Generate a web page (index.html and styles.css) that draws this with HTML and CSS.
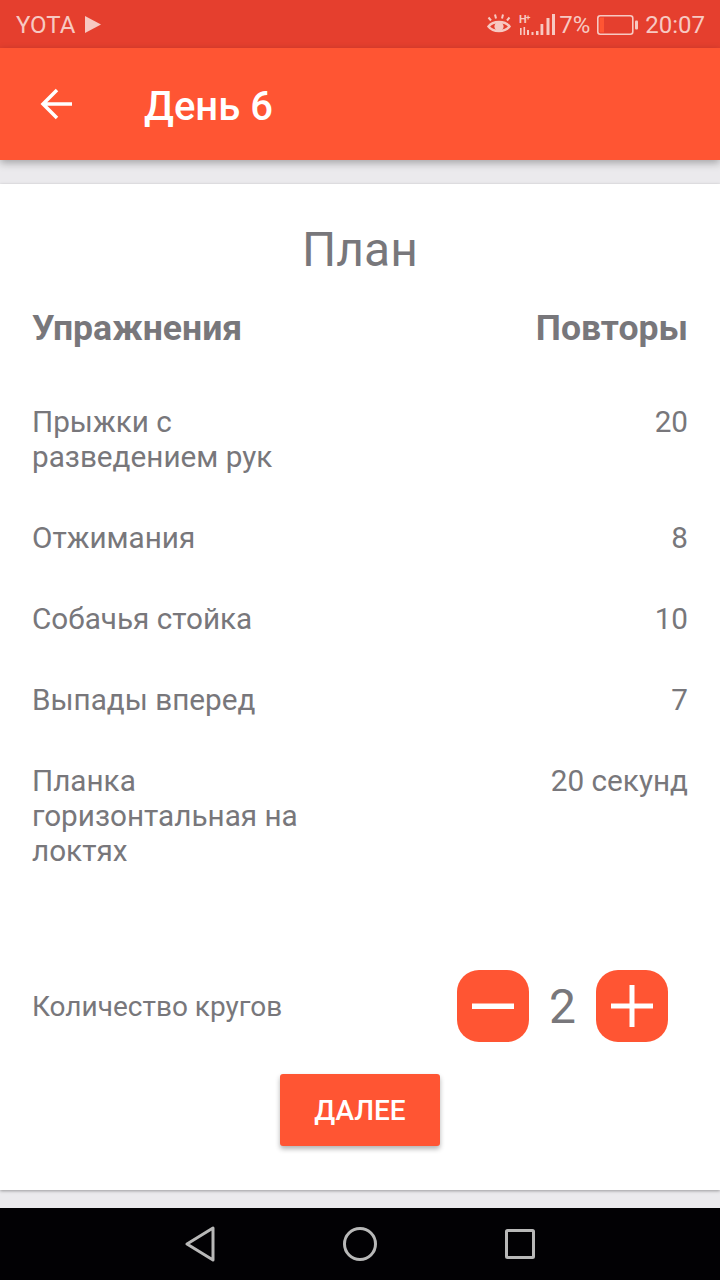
FILE: index.html
```html
<!DOCTYPE html>
<html lang="ru">
<head>
<meta charset="utf-8">
<title>День 6</title>
<link rel="stylesheet" href="styles.css">
</head>
<body>
<div class="screen">
  <div class="status">
    <div class="status-left"><span>YOTA</span>
      <svg class="play" width="16" height="17" viewBox="0 0 16 17"><path d="M0 0L16 8.500L0 17Z" fill="#f7c9c2"/></svg>
    </div>
    <div class="status-right">
      <svg class="eye" width="24" height="21" viewBox="0 0 24 21" fill="none" stroke="#f7c9c2" stroke-width="2.400"><path d="M1.500 12.500C6 6.500 18 6.500 22.500 12.500C18 18.500 6 18.500 1.500 12.500Z"/><circle cx="12" cy="12.500" r="4.600" fill="#f7c9c2" stroke="none"/><path d="M4 6.500L1.500 3.500M9 4.500L8 .5M15 4.500L16 .5M20 6.500L22.500 3.500" stroke-width="2"/></svg>
      <svg class="signal" width="36" height="22" viewBox="0 0 36 22" fill="#f7c9c2"><text class="net" x="0" y="9">H</text><text class="net-plus" x="7" y="6">+</text><rect x="1" y="14" width="1.600" height="7"/><rect x="4.500" y="13" width="1.600" height="8"/><rect x="8" y="16" width="2" height="5"/><rect x="12.500" y="18" width="2" height="3"/><rect x="17" y="17" width="2.500" height="4"/><rect x="21.500" y="10" width="2.800" height="11"/><rect x="27.500" y="4" width="3" height="17"/><rect x="33" y="0" width="3" height="21"/></svg>
      <span class="pct">7%</span>
      <svg class="battery" width="41" height="20" viewBox="0 0 41 20"><rect x=".8" y=".8" width="35" height="18.400" rx="2.500" fill="none" stroke="#f7c9c2" stroke-width="1.600"/><rect x="2.500" y="2.500" width="4.500" height="15" fill="#ff5533"/><rect x="38" y="5.500" width="3" height="9" rx="1" fill="#f7c9c2"/></svg>
      <span class="clock">20:07</span>
    </div>
  </div>
  <header class="appbar">
    <svg class="back" width="33" height="32" viewBox="0 0 33 32" fill="none" stroke="#fff" stroke-width="3.500"><path d="M32 16H3M17 2L3 16L17 30"/></svg>
    <h1 class="appbar-title">День 6</h1>
  </header>
  <main class="page">
    <section class="card">
      <h2 class="plan-title">План</h2>
      <div class="row head"><span>Упражнения</span><span>Повторы</span></div>
      <div class="row first"><span class="name">Прыжки с разведением рук</span><span>20</span></div>
      <div class="row"><span class="name">Отжимания</span><span>8</span></div>
      <div class="row"><span class="name">Собачья стойка</span><span>10</span></div>
      <div class="row"><span class="name">Выпады вперед</span><span>7</span></div>
      <div class="row"><span class="name">Планка горизонтальная на локтях</span><span>20 секунд</span></div>
      <div class="rounds">
        <span>Количество кругов</span>
        <div class="stepper">
          <button class="step" type="button" aria-label="Меньше"><svg width="42" height="42" viewBox="0 0 42 42"><rect y="18.500" width="42" height="5.500" fill="#fff"/></svg></button>
          <span class="count">2</span>
          <button class="step" type="button" aria-label="Больше"><svg width="42" height="42" viewBox="0 0 42 42"><path d="M0 18.500H18.500V0H23.500V18.500H42V23.500H23.500V42H18.500V23.500H0Z" fill="#fff"/></svg></button>
        </div>
      </div>
      <div class="actions"><button class="next" type="button">ДАЛЕЕ</button></div>
    </section>
  </main>
  <nav class="navbar">
    <svg width="30" height="36" viewBox="0 0 30 36" fill="none" stroke="#b8b8b8" stroke-width="3" stroke-linejoin="round"><path d="M28 2V34L2 18Z"/></svg>
    <svg width="34" height="36" viewBox="0 0 34 36" fill="none" stroke="#b8b8b8" stroke-width="3"><circle cx="17" cy="18" r="15.500"/></svg>
    <svg width="30" height="30" viewBox="0 0 30 30" fill="none" stroke="#b8b8b8" stroke-width="3" stroke-linejoin="round"><rect x="1.500" y="1.500" width="27" height="27" rx="1"/></svg>
  </nav>
</div>
</body>
</html>
```
FILE: styles.css
```css
* { box-sizing: border-box; }
html, body { margin: 0; padding: 0; }
body { font-family: Roboto, "Noto Sans", sans-serif; background: #ebeaed; color: #78777b; }
.screen { width: 720px; height: 1280px; display: flex; flex-direction: column; overflow: hidden; }

.status { height: 48px; flex: none; background: #e53f2e; color: #f7c9c2; display: flex; align-items: center; justify-content: space-between; padding: 1px 15px 0 16px; font-size: 24px; }
.status-left { display: flex; align-items: center; gap: 10px; }
.status-right { display: flex; align-items: center; }
.eye { margin-right: 8px; }
.signal { margin-right: 4px; overflow: visible; }
.net { font-family: Roboto, sans-serif; font-size: 11px; font-weight: 700; }
.net-plus { font-family: Roboto, sans-serif; font-size: 8px; font-weight: 700; }
.pct { margin-right: 7px; }
.battery { margin-right: 7px; }

.appbar { height: 112px; flex: none; background: #ff5533; display: flex; align-items: center; padding-left: 40px; box-shadow: 0 3px 8px rgba(0,0,0,.3); position: relative; }
.back { flex: none; }
.appbar-title { margin: 4px 0 0 71px; font-size: 40px; font-weight: 500; color: #fff; }

.page { flex: 1; padding: 24px 0 18px; min-height: 0; display: flex; }
.card { flex: 1; background: #fff; padding: 0 32px; box-shadow: 0 1px 3px rgba(0,0,0,.35); }
.plan-title { margin: 34px 0 0; text-align: center; font-size: 48px; font-weight: 400; line-height: 64px; }

.row { display: flex; justify-content: space-between; align-items: flex-start; font-size: 29.700px; line-height: 35px; margin-top: 46px; }
.row.head { font-size: 35.600px; font-weight: 700; line-height: 40px; margin-top: 26px; }
.row.first { margin-top: 56px; }
.name { width: 280px; }

.rounds { display: flex; align-items: center; justify-content: space-between; margin-top: 102px; font-size: 28px; padding-right: 20px; }
.stepper { display: flex; align-items: center; }
.step { width: 72px; height: 72px; border: 0; padding: 0; border-radius: 22px; background: #ff5533; display: flex; align-items: center; justify-content: center; }
.count { width: 67px; text-align: center; font-size: 48px; }

.actions { display: flex; justify-content: center; margin-top: 32px; }
.next { width: 160px; height: 72px; border: 0; border-radius: 3px; background: #ff5533; color: #fff; font-family: inherit; font-size: 28px; font-weight: 500; box-shadow: 0 3px 5px rgba(0,0,0,.3); }

.navbar { height: 72px; flex: none; background: #020104; display: flex; align-items: center; justify-content: center; gap: 128px; }
```
